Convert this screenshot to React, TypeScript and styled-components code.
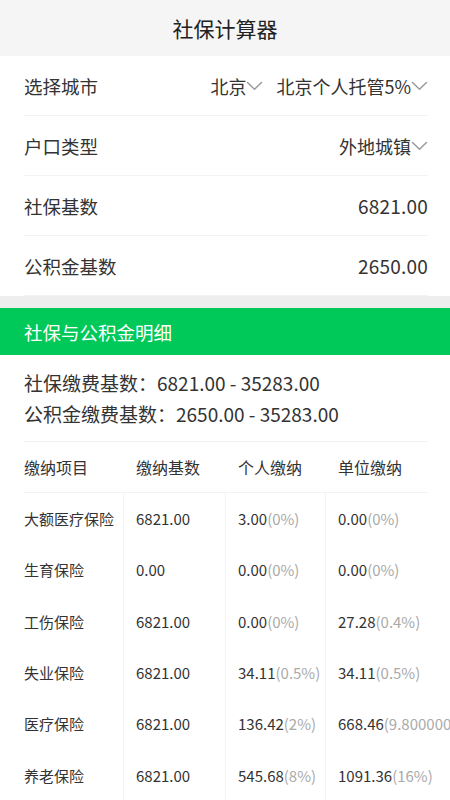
import React from "react";
import styled, { createGlobalStyle } from "styled-components";

const Global = createGlobalStyle`
  html, body { margin: 0; padding: 0; background: #fff; overflow-x: hidden; }
  body { font-family: "Noto Sans CJK SC", "Noto Sans", sans-serif; color: #333; width: 450px; }
  * { box-sizing: border-box; }
`;

const Page = styled.div`
  width: 450px;
  overflow: hidden;
`;

const Header = styled.header`
  height: 56px;
  background: #f5f5f5;
  display: flex;
  align-items: center;
  justify-content: center;
  font-size: 21px;
  color: #222;
`;

const Form = styled.section`
  padding: 0 22px 0 24px;
  background: #fff;
`;

const Row = styled.div`
  height: 60px;
  display: flex;
  align-items: center;
  justify-content: space-between;
  border-bottom: 1px solid #f3f3f3;
  font-size: 18.5px;
  color: #333;
`;

const Value = styled.div`
  display: flex;
  align-items: center;
  gap: 13px;
  font-size: 18px;
  color: #333;
`;

const Number = styled.span`
  font-size: 19px;
  color: #333;
  letter-spacing: 0.2px;
`;

const Select = styled.span`
  display: inline-flex;
  align-items: center;
  gap: 0;
`;

const Band = styled.div`
  height: 12px;
  background: #eeeeee;
`;

const SectionBar = styled.div`
  height: 47px;
  background: #00c95a;
  color: #fff;
  font-size: 18.5px;
  display: flex;
  align-items: center;
  padding-left: 24px;
`;

const Info = styled.div`
  margin: 0 22px 0 24px;
  padding: 12px 0 12px;
  border-bottom: 1px solid #f3f3f3;
  font-size: 19px;
  line-height: 31px;
  color: #333;
`;

const Table = styled.div`
  margin: 0 22px 0 24px;
`;

const TRow = styled.div<{ $head?: boolean }>`
  display: grid;
  grid-template-columns: 100px 102px 100px 1fr;
  height: ${(p) => (p.$head ? "51px" : "51.3px")};
  border-bottom: ${(p) => (p.$head ? "1px solid #f3f3f3" : "none")};
  font-size: ${(p) => (p.$head ? "16px" : "15px")};
  color: #333;
`;

const Cell = styled.div<{ $first?: boolean; $head?: boolean }>`
  display: flex;
  align-items: center;
  white-space: nowrap;
  padding-left: ${(p) => (p.$first ? "0" : "12px")};
  border-left: ${(p) => (p.$first || p.$head ? "none" : "1.5px solid #f4f4f4")};
  margin-left: ${(p) => (p.$first || p.$head ? "0" : "-1px")};
`;

const Pct = styled.span`
  color: #aaa;
`;

const Chevron = () => (
  <svg width="17" height="10" viewBox="0 0 17 10" fill="none">
    <path d="M1.5 1.5 L8.5 8.3 L15.5 1.5" stroke="#9a9a9a" strokeWidth="1.5" strokeLinecap="round" strokeLinejoin="round" />
  </svg>
);

const rows: [string, string, string, string, string, string][] = [
  ["大额医疗保险", "6821.00", "3.00", "(0%)", "0.00", "(0%)"],
  ["生育保险", "0.00", "0.00", "(0%)", "0.00", "(0%)"],
  ["工伤保险", "6821.00", "0.00", "(0%)", "27.28", "(0.4%)"],
  ["失业保险", "6821.00", "34.11", "(0.5%)", "34.11", "(0.5%)"],
  ["医疗保险", "6821.00", "136.42", "(2%)", "668.46", "(9.800000"],
  ["养老保险", "6821.00", "545.68", "(8%)", "1091.36", "(16%)"],
];

export default function App() {
  return (
    <Page>
      <Global />
      <Header>社保计算器</Header>
      <Form>
        <Row>
          <span>选择城市</span>
          <Value>
            <Select>
              北京
              <Chevron />
            </Select>
            <Select>
              北京个人托管5%
              <Chevron />
            </Select>
          </Value>
        </Row>
        <Row>
          <span>户口类型</span>
          <Value>
            <Select>
              外地城镇
              <Chevron />
            </Select>
          </Value>
        </Row>
        <Row>
          <span>社保基数</span>
          <Number>6821.00</Number>
        </Row>
        <Row>
          <span>公积金基数</span>
          <Number>2650.00</Number>
        </Row>
      </Form>
      <Band />
      <SectionBar>社保与公积金明细</SectionBar>
      <Info>
        <div>社保缴费基数：6821.00 - 35283.00</div>
        <div>公积金缴费基数：2650.00 - 35283.00</div>
      </Info>
      <Table>
        <TRow $head>
          <Cell $first $head>缴纳项目</Cell>
          <Cell $head>缴纳基数</Cell>
          <Cell $head>个人缴纳</Cell>
          <Cell $head>单位缴纳</Cell>
        </TRow>
        {rows.map((r) => (
          <TRow key={r[0]}>
            <Cell $first>{r[0]}</Cell>
            <Cell>{r[1]}</Cell>
            <Cell>
              {r[2]}
              <Pct>{r[3]}</Pct>
            </Cell>
            <Cell>
              {r[4]}
              <Pct>{r[5]}</Pct>
            </Cell>
          </TRow>
        ))}
      </Table>
    </Page>
  );
}
